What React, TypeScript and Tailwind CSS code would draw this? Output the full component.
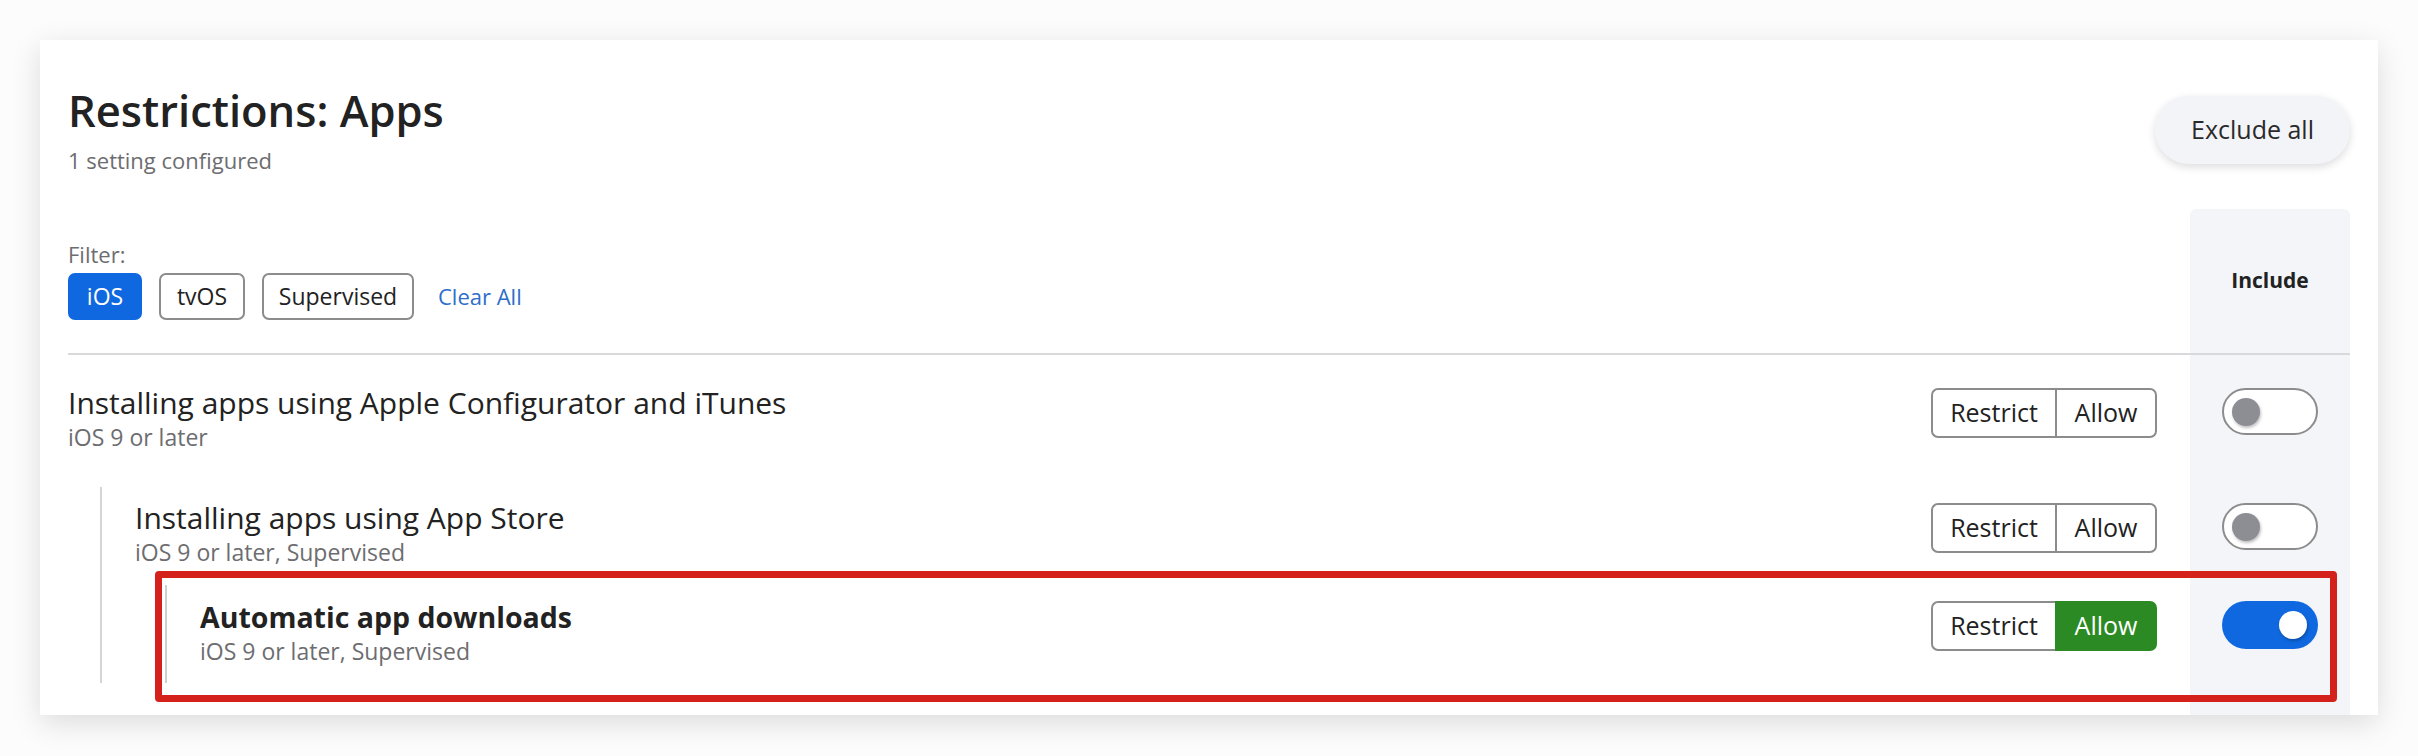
import type { ReactNode } from 'react';

const font = { fontFamily: '"Open Sans", Lato, sans-serif' };

function Segmented({ allow }: { allow?: boolean }) {
  return (
    <div className="flex h-[50px] text-[25px] text-[#222]">
      <span className="flex w-[124px] items-center justify-center rounded-l-[7px] border-2 border-r-0 border-[#8c8c8c] bg-white">
        Restrict
      </span>
      <span
        className={
          allow
            ? 'flex w-[102px] items-center justify-center rounded-r-[7px] border-2 border-[#2b8a24] bg-[#2b8a24] text-white'
            : 'flex w-[102px] items-center justify-center rounded-r-[7px] border-2 border-[#8c8c8c] bg-white'
        }
      >
        Allow
      </span>
    </div>
  );
}

function Toggle({ on }: { on?: boolean }) {
  if (on) {
    return (
      <div className="flex h-[48px] w-[96px] items-center justify-end rounded-full bg-[#0f68e0] pr-[11px]">
        <span className="h-[28px] w-[28px] rounded-full bg-white shadow-[1px_2px_3px_rgba(0,0,0,0.25)]" />
      </div>
    );
  }
  return (
    <div className="flex h-[47px] w-[96px] items-center rounded-full border-2 border-[#8c8c8c] bg-white pl-[8px]">
      <span className="h-[28px] w-[28px] rounded-full bg-[#8d8e93] shadow-[1px_2px_3px_rgba(0,0,0,0.25)]" />
    </div>
  );
}

function IncludeCell({ children, className = '' }: { children?: ReactNode; className?: string }) {
  return <div className={`flex w-[160px] justify-center bg-[#f4f5f9] ${className}`}>{children}</div>;
}

function Row({
  title,
  sub,
  bold,
  allow,
  on,
  textPad,
  ctrlPad,
}: {
  title: string;
  sub: string;
  bold?: boolean;
  allow?: boolean;
  on?: boolean;
  textPad: string;
  ctrlPad: string;
}) {
  return (
    <div className="flex h-[98px]">
      <div className="flex flex-1 items-start justify-between pr-[33px]">
        <div className={textPad}>
          <div className={bold ? 'text-[28.5px] leading-[36px] font-bold text-[#222]' : 'text-[30px] leading-[36px] text-[#222]'}>
            {title}
          </div>
          <div className="mt-[2px] text-[23px] leading-[28px] text-[#6d6d70]">{sub}</div>
        </div>
        <div className={ctrlPad}>
          <Segmented allow={allow} />
        </div>
      </div>
      <IncludeCell className={ctrlPad}>
        <Toggle on={on} />
      </IncludeCell>
    </div>
  );
}

export default function App() {
  return (
    <div className="h-[756px] w-full bg-[#fcfcfc] pt-[40px] pl-[40px]" style={font}>
      <div className="relative h-[675px] w-[2338px] bg-white px-[28px] pt-[45px] shadow-[0_8px_28px_rgba(0,0,0,0.13)]">
        {/* header */}
        <div className="flex items-start justify-between">
          <div>
            <h1 className="text-[43.5px] leading-[52px] font-semibold text-[#222]">Restrictions: Apps</h1>
            <p className="mt-[9px] text-[22px] leading-[28px] text-[#6d6d70]">1 setting configured</p>
          </div>
          <button className="mt-[11px] h-[68px] w-[195px] rounded-full bg-[#f3f4f8] text-[25px] text-[#2a2a2a] shadow-[0_3px_8px_rgba(0,0,0,0.14)]">
            Exclude all
          </button>
        </div>

        <div className="mt-[35px]">
          {/* filter + column header */}
          <div className="flex h-[146px] border-b-2 border-[#d9d9db]">
            <div className="flex-1 pt-[31px]">
              <div className="text-[22px] leading-[28px] text-[#6d6d70]">Filter:</div>
              <div className="mt-[5px] flex items-center gap-[17px] text-[23px]">
                <span className="flex h-[47px] w-[74px] items-center justify-center rounded-[7px] bg-[#0f68e0] text-white">iOS</span>
                <span className="flex h-[47px] w-[86px] items-center justify-center rounded-[7px] border-2 border-[#8c8c8c] text-[#222]">tvOS</span>
                <span className="flex h-[47px] w-[152px] items-center justify-center rounded-[7px] border-2 border-[#8c8c8c] text-[#222]">Supervised</span>
                <span className="ml-[7px] text-[22px] text-[#2d6ecb]">Clear All</span>
              </div>
            </div>
            <IncludeCell className="items-center rounded-t-[6px] text-[21px] font-bold text-[#222]">Include</IncludeCell>
          </div>

          {/* rows */}
          <div className="flex h-[132px]">
            <div className="flex flex-1 items-start justify-between pr-[33px]">
              <div className="pt-[30px]">
                <div className="text-[30px] leading-[36px] text-[#222]">Installing apps using Apple Configurator and iTunes</div>
                <div className="mt-[2px] text-[23px] leading-[28px] text-[#6d6d70]">iOS 9 or later</div>
              </div>
              <div className="pt-[33px]">
                <Segmented />
              </div>
            </div>
            <IncludeCell className="pt-[33px]">
              <Toggle />
            </IncludeCell>
          </div>

          <div className="ml-[32px] border-l-2 border-[#d5d5d9]">
            <div className="pl-[33px]">
              <Row title="Installing apps using App Store" sub="iOS 9 or later, Supervised" textPad="pt-[13px]" ctrlPad="pt-[16px]" />
            </div>
            <div className="ml-[63px] border-l-2 border-[#cfcfd3] pl-[33px]">
              <Row title="Automatic app downloads" sub="iOS 9 or later, Supervised" bold allow on textPad="pt-[14px]" ctrlPad="pt-[16px]" />
            </div>
          </div>

          <div className="flex h-[32px]">
            <div className="flex-1" />
            <IncludeCell />
          </div>
        </div>

        {/* highlight annotation */}
        <div className="pointer-events-none absolute top-[531px] left-[115px] h-[131px] w-[2182px] rounded-[4px] border-[7px] border-[#d5211b]" />
      </div>
    </div>
  );
}
